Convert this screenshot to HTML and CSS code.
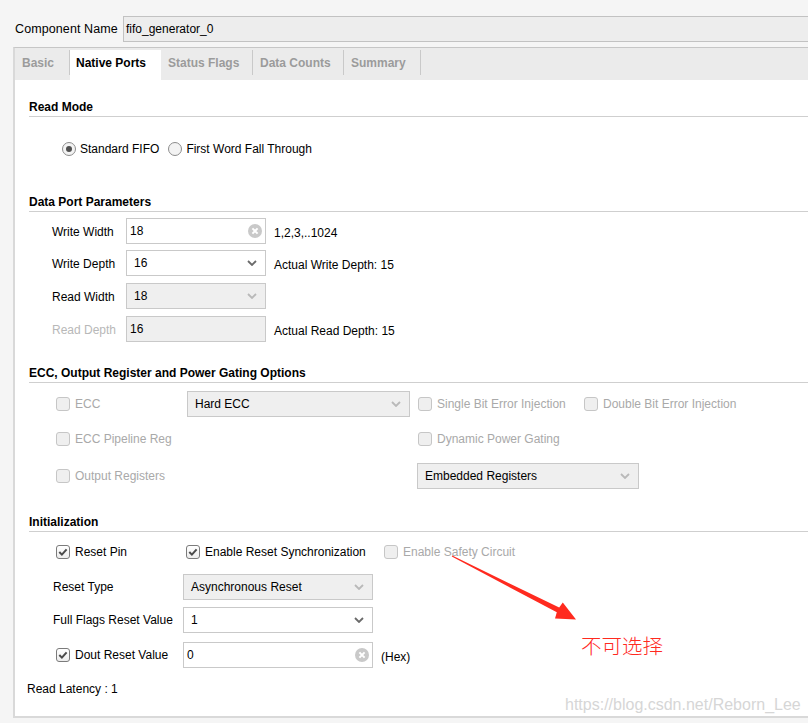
FILE: index.html
```html
<!DOCTYPE html>
<html>
<head>
<meta charset="utf-8">
<link rel="stylesheet" href="styles.css">
</head>
<body>
<div class="top">
  <span class="cn-label">Component Name</span>
  <div class="cn-input">fifo_generator_0</div>
</div>
<div class="panel">
  <div class="tabs">
    <div class="tab t1">Basic</div>
    <div class="tab t2 active">Native Ports</div>
    <div class="tab t3">Status Flags</div>
    <div class="tab t4">Data Counts</div>
    <div class="tab t5">Summary</div>
  </div>
  <div class="content">
    <div class="sec-title s-read">Read Mode</div>
    <div class="radio-row">
      <label class="ritem first"><span class="rb on"></span><span>Standard FIFO</span></label>
      <label class="ritem"><span class="rb"></span><span>First Word Fall Through</span></label>
    </div>

    <div class="sec-title s-data">Data Port Parameters</div>
    <div class="frow d1">
      <span class="flbl">Write Width</span>
      <div class="tf dw">
        <span>18</span>
        <svg class="clr" viewBox="0 0 14 14"><circle cx="7" cy="7" r="7" fill="#c9c9c9"/><path d="M4.4 4.4 L9.6 9.6 M9.6 4.4 L4.4 9.6" stroke="#fff" stroke-width="2"/></svg>
      </div>
      <span class="hint">1,2,3,..1024</span>
    </div>
    <div class="frow d2">
      <span class="flbl">Write Depth</span>
      <div class="tf combo dw">
        <span>16</span>
        <svg class="chev" viewBox="0 0 10 6"><path d="M1 1 L5 5 L9 1" fill="none" stroke="#6a6a6a" stroke-width="1.8"/></svg>
      </div>
      <span class="hint">Actual Write Depth: 15</span>
    </div>
    <div class="frow d3">
      <span class="flbl">Read Width</span>
      <div class="tf combo dis dw">
        <span>18</span>
        <svg class="chev" viewBox="0 0 10 6"><path d="M1 1 L5 5 L9 1" fill="none" stroke="#b9b9b9" stroke-width="1.8"/></svg>
      </div>
    </div>
    <div class="frow d4">
      <span class="flbl muted">Read Depth</span>
      <div class="tf dis dw"><span>16</span></div>
      <span class="hint">Actual Read Depth: 15</span>
    </div>

    <div class="sec-title s-ecc">ECC, Output Register and Power Gating Options</div>
    <div class="erow e1">
      <label class="citem c1 off"><span class="cb"></span><span>ECC</span></label>
      <div class="tf combo dis ew">
        <span>Hard ECC</span>
        <svg class="chev" viewBox="0 0 10 6"><path d="M1 1 L5 5 L9 1" fill="none" stroke="#b9b9b9" stroke-width="1.8"/></svg>
      </div>
      <label class="citem c3 off"><span class="cb"></span><span>Single Bit Error Injection</span></label>
      <label class="citem off"><span class="cb"></span><span>Double Bit Error Injection</span></label>
    </div>
    <div class="erow e2">
      <label class="citem c1 off"><span class="cb"></span><span>ECC Pipeline Reg</span></label>
      <div class="spacer ew"></div>
      <label class="citem off"><span class="cb"></span><span>Dynamic Power Gating</span></label>
    </div>
    <div class="erow e3">
      <label class="citem c1 off"><span class="cb"></span><span>Output Registers</span></label>
      <div class="spacer ew"></div>
      <div class="tf combo dis ew2">
        <span>Embedded Registers</span>
        <svg class="chev" viewBox="0 0 10 6"><path d="M1 1 L5 5 L9 1" fill="none" stroke="#b9b9b9" stroke-width="1.8"/></svg>
      </div>
    </div>

    <div class="sec-title s-init">Initialization</div>
    <div class="irow i1">
      <label class="citem ia"><span class="cb on"><svg viewBox="0 0 14 14"><path d="M3.3 7 L5.9 9.6 L10.6 4.3" fill="none" stroke="#4a4a4a" stroke-width="2"/></svg></span><span>Reset Pin</span></label>
      <label class="citem ib"><span class="cb on"><svg viewBox="0 0 14 14"><path d="M3.3 7 L5.9 9.6 L10.6 4.3" fill="none" stroke="#4a4a4a" stroke-width="2"/></svg></span><span>Enable Reset Synchronization</span></label>
      <label class="citem off"><span class="cb"></span><span>Enable Safety Circuit</span></label>
    </div>
    <div class="irow i2">
      <span class="ilbl">Reset Type</span>
      <div class="tf combo dis iw">
        <span>Asynchronous Reset</span>
        <svg class="chev" viewBox="0 0 10 6"><path d="M1 1 L5 5 L9 1" fill="none" stroke="#b9b9b9" stroke-width="1.8"/></svg>
      </div>
    </div>
    <div class="irow i3">
      <span class="ilbl">Full Flags Reset Value</span>
      <div class="tf combo iw">
        <span>1</span>
        <svg class="chev" viewBox="0 0 10 6"><path d="M1 1 L5 5 L9 1" fill="none" stroke="#6a6a6a" stroke-width="1.8"/></svg>
      </div>
    </div>
    <div class="irow i4">
      <label class="citem ic"><span class="cb on"><svg viewBox="0 0 14 14"><path d="M3.3 7 L5.9 9.6 L10.6 4.3" fill="none" stroke="#4a4a4a" stroke-width="2"/></svg></span><span>Dout Reset Value</span></label>
      <div class="tf iw">
        <span>0</span>
        <svg class="clr" viewBox="0 0 14 14"><circle cx="7" cy="7" r="7" fill="#c9c9c9"/><path d="M4.4 4.4 L9.6 9.6 M9.6 4.4 L4.4 9.6" stroke="#fff" stroke-width="2"/></svg>
      </div>
      <span class="hex">(Hex)</span>
    </div>
    <div class="latency">Read Latency : 1</div>
  </div>
</div>

<svg class="arrow" width="808" height="723" viewBox="0 0 808 723">
  <polygon points="452.2,555.5 559.2,607.6 562.8,602.5 576,619.5 555,618.6 556.8,612.3 451.8,556.6" fill="#ff2a1f"/>
</svg>
<div class="note">不可选择</div>
<div class="watermark">https://blog.csdn.net/Reborn_Lee</div>
</body>
</html>
```
FILE: styles.css
```css
* { box-sizing: border-box; }
html, body { margin: 0; height: 723px; overflow: hidden; }
body {
  background: #f5f5f5;
  font-family: "Liberation Sans", Arial, sans-serif;
  font-size: 12px;
  color: #000;
  position: relative;
}

.top { display: flex; align-items: center; padding: 16px 0 0 15px; }
.cn-label { width: 108px; font-size: 12.5px; letter-spacing: 0.1px; }
.cn-input {
  flex: 1; height: 26px; line-height: 24px;
  border: 1px solid #c2c2c2; border-right: 0;
  background: #ededed; padding-left: 2px;
}

.panel {
  margin: 5px 0 0 13px;
  border-left: 2px solid #d9d9d9;
  border-top: 1px solid #c6c6c6;
  border-bottom: 2px solid #d9d9d9;
  background: #fff;
}
.tabs { display: flex; height: 32px; padding-top: 2px; background: #ebebeb; }
.tab {
  height: 30px; line-height: 27px; padding-left: 7px;
  font-weight: bold; color: #9b9b9b; white-space: nowrap;
  background: linear-gradient(#c9c9c9, #c9c9c9) right top / 1px 25px no-repeat;
}
.tab.active { background: #fff; color: #000; padding-left: 6px; }
.t1 { width: 55px; }
.t2 { width: 91px; }
.t3 { width: 92px; }
.t4 { width: 91px; }
.t5 { width: 77px; }

.content { padding: 0 0 20px 14px; }
.sec-title {
  font-weight: bold; line-height: 14px;
  padding: 1px 0 2px; border-bottom: 1px solid #cfcfcf;
}
.s-read { margin-top: 19px; }
.s-data { margin-top: 35px; }
.s-ecc { margin-top: 23px; }
.s-init { margin-top: 25px; }

.radio-row { display: flex; align-items: center; height: 20px; margin-top: 22px; padding-left: 33px; }
.ritem { display: flex; align-items: center; gap: 4px; }
.ritem.first { margin-right: 9px; }
.rb {
  width: 14px; height: 14px; border-radius: 50%;
  border: 1px solid #8c8c8c; background: #f3f3f3;
  display: flex; align-items: center; justify-content: center;
}
.rb.on::after { content: ""; width: 6px; height: 6px; border-radius: 50%; background: #505050; }

.frow { display: flex; align-items: center; height: 26px; margin-top: 7px; padding-left: 23px; }
.frow.d1 { margin-top: 6px; }
.frow.d2 { margin-top: 6px; }
.flbl { width: 74px; padding-top: 1px; }
.flbl.muted { color: #b8b8b8; }
.hint { margin-left: 8px; padding-top: 4px; }

.tf {
  height: 26px; border: 1px solid #c9c9c9; background: #fff;
  display: flex; align-items: center; justify-content: space-between;
  padding-left: 3px; padding-right: 3px;
}
.tf.combo { padding-left: 7px; padding-right: 8px; }
.tf.dis { background: #efefef; }
.dw { width: 140px; }
.ew { width: 223px; }
.ew2 { width: 222px; }
.iw { width: 190px; }
.clr { width: 14px; height: 14px; }
.chev { width: 10px; height: 6px; }

.erow { display: flex; align-items: center; height: 26px; padding-left: 27px; }
.e1 { margin-top: 8px; }
.e2 { margin-top: 9px; }
.e3 { margin-top: 11px; }
.spacer { height: 1px; }
.c1 { width: 131px; }
.c3 { width: 166px; }
.erow .ew + .citem, .erow .ew + .tf { margin-left: 8px; }
.erow .spacer.ew + .tf { margin-left: 7px; }

.citem { display: flex; align-items: center; gap: 5px; white-space: nowrap; }
.citem.off { color: #a9a9a9; }
.cb {
  width: 14px; height: 14px; border-radius: 3px;
  border: 1px solid #7b7b7b; background: linear-gradient(#ffffff, #ececec);
  display: flex; align-items: center; justify-content: center;
}
.cb svg { width: 14px; height: 14px; flex: none; }
.citem.off .cb { border-color: #c6c6c6; background: #efefef; }

.irow { display: flex; align-items: center; padding-left: 27px; }
.i1 { height: 20px; margin-top: 10px; }
.i2 { height: 26px; margin-top: 12px; }
.i3 { height: 26px; margin-top: 7px; }
.i4 { height: 26px; margin-top: 9px; }
.ia { width: 130px; }
.ib { width: 198px; }
.ic { width: 127px; }
.ilbl { width: 130px; margin-left: -3px; }
.hex { margin-left: 8px; padding-top: 3px; }

.latency { margin-top: 14px; margin-left: -2px; line-height: 14px; }

.arrow { position: absolute; left: 0; top: 0; pointer-events: none; }
.note {
  position: absolute; left: 581px; top: 633px;
  font-family: "Noto Sans CJK SC", sans-serif; font-size: 20.5px; line-height: 24px;
  color: #ff2a1f; font-weight: 300;
}
.watermark {
  position: absolute; left: 565px; top: 696px;
  font-family: "Liberation Sans", Arial, sans-serif; font-size: 16px; line-height: 18px;
  color: #d6d6d6;
}
```
